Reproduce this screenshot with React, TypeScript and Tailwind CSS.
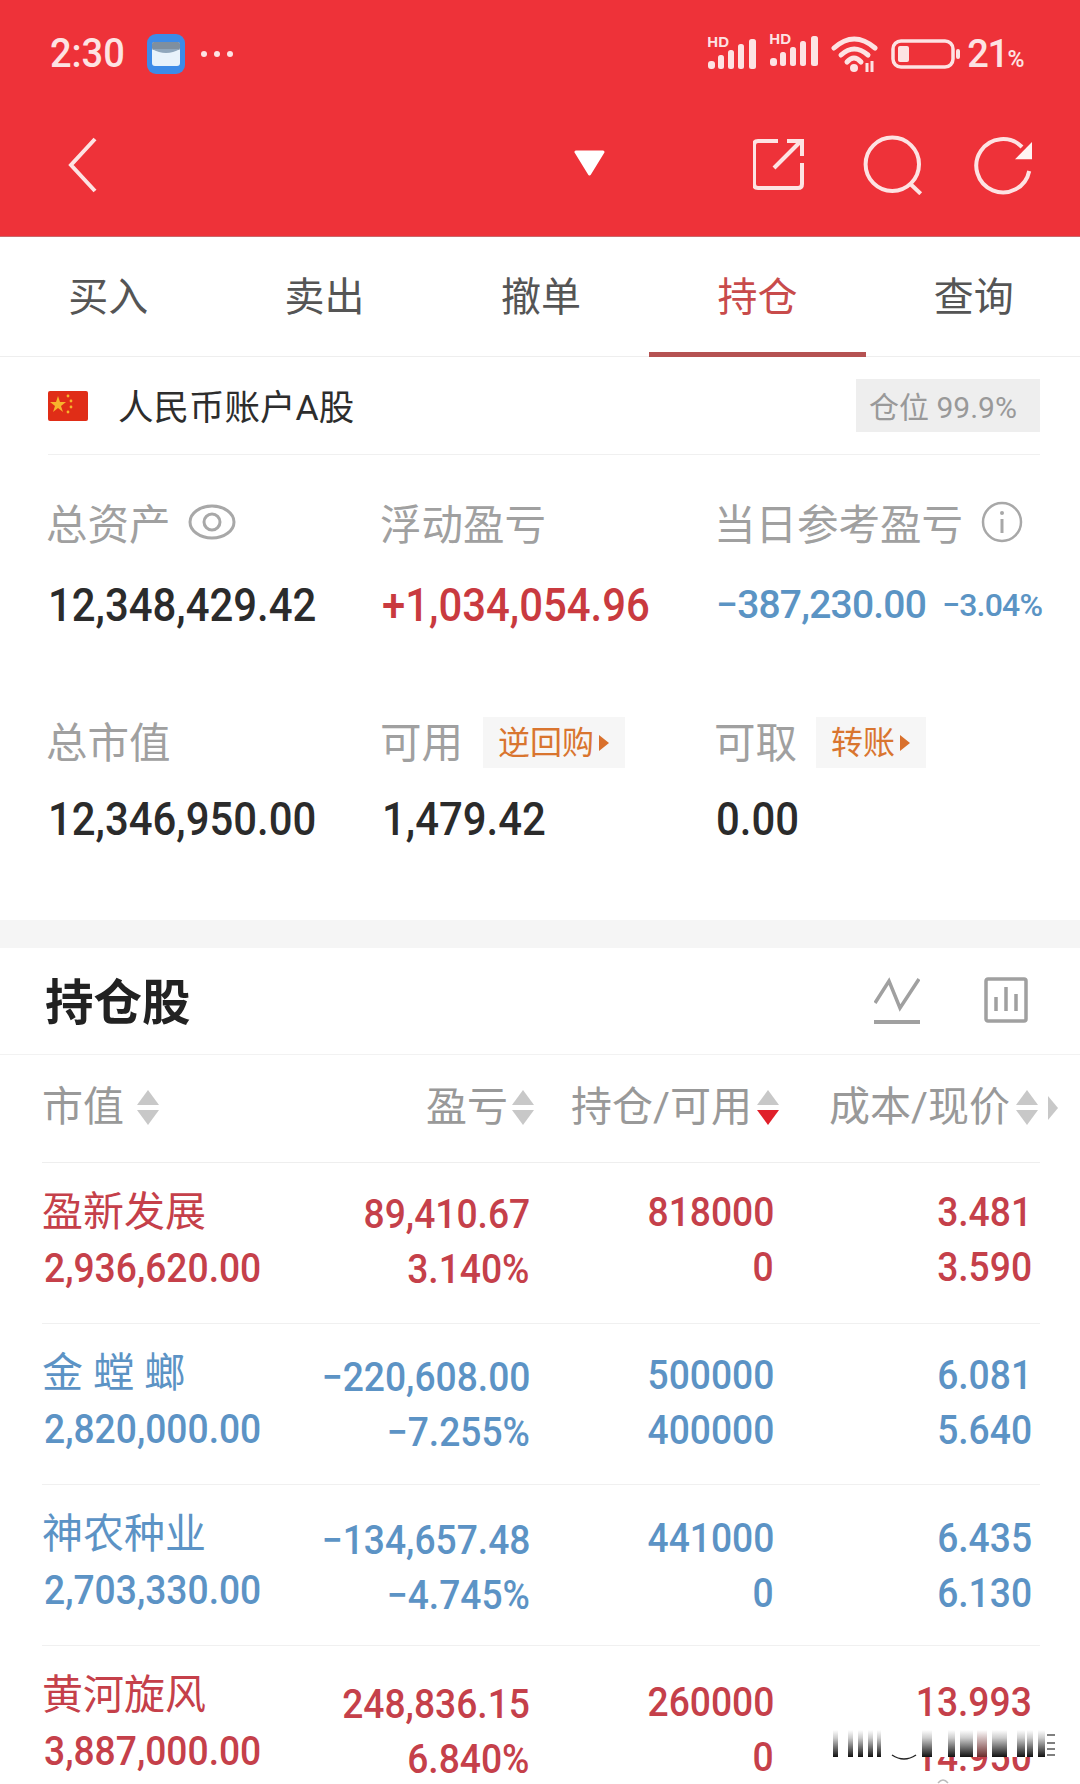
const rows = [
  { name: "盈新发展", mv: "2,936,620.00", p: "89,410.67", r: "3.140%", h: "818000", a: "0", c: "3.481", n: "3.590", up: true, off: "mt-[0px]" },
  { name: "金 螳 螂", mv: "2,820,000.00", p: "−220,608.00", r: "−7.255%", h: "500000", a: "400000", c: "6.081", n: "5.640", up: false, off: "mt-[2px]" },
  { name: "神农种业", mv: "2,703,330.00", p: "−134,657.48", r: "−4.745%", h: "441000", a: "0", c: "6.435", n: "6.130", up: false, off: "mt-[4px]" },
  { name: "黄河旋风", mv: "3,887,000.00", p: "248,836.15", r: "6.840%", h: "260000", a: "0", c: "13.993", n: "14.950", up: true, off: "mt-[7px]" },
];

function Sort({ red = false }: { red?: boolean }) {
  return (
    <svg width="24" height="37" viewBox="0 0 24 37" className="shrink-0">
      <path d="M12 1 L23 16 H1 Z" fill="#c8c8c8" strokeLinejoin="round" />
      <path d="M12 36 L23 21 H1 Z" fill={red ? "#e0202a" : "#c8c8c8"} />
    </svg>
  );
}

function Signal() {
  return (
    <span className="relative inline-block w-[50px] h-[32px]">
      <span className="absolute left-0 top-[-4px] text-[15px] font-bold leading-none text-[#fde3e3] font-['Liberation_Sans',sans-serif]">HD</span>
      <svg width="50" height="32" viewBox="0 0 50 32" className="absolute left-0 top-0">
        <g fill="#fde3e3">
          <rect x="1" y="23" width="7" height="8" rx="3" />
          <rect x="11" y="17" width="6" height="14" rx="2.5" />
          <rect x="21" y="12" width="6" height="19" rx="2.5" />
          <rect x="31" y="6" width="6" height="25" rx="2.5" />
          <rect x="42" y="1" width="7" height="30" rx="2.5" />
        </g>
      </svg>
    </span>
  );
}

const big = "h-[60px] flex items-center text-[46px] font-medium origin-left scale-x-[0.91] whitespace-nowrap";

export default function App() {
  return (
    <div className="relative w-[1080px] h-[1784px] overflow-hidden bg-white font-['Roboto','Noto_Sans_CJK_SC',sans-serif]">
      <header className="h-[237px] bg-[#ee3239] flex flex-col border-b border-[#c9686b]">
        <div className="h-[108px] flex items-center justify-between pl-[50px] pr-[57px]">
          <div className="flex items-center">
            <span className="text-[40px] font-medium leading-none text-[#fde3e3] origin-left scale-x-[0.95]">2:30</span>
            <svg width="38" height="40" viewBox="0 0 38 40" className="ml-[18px]">
              <rect x="0" y="0" width="38" height="40" rx="9" fill="#3d8be8" />
              <rect x="5" y="8" width="28" height="24" rx="3" fill="#e8f2fb" />
              <rect x="5" y="8" width="28" height="8" rx="2" fill="#7f8f9f" />
              <path d="M5 15 Q19 23 33 15" fill="#8fa6bc" />
            </svg>
            <div className="ml-[16px] flex gap-[7px]">
              <span className="w-[6px] h-[6px] rounded-full bg-[#fde3e3]" />
              <span className="w-[6px] h-[6px] rounded-full bg-[#fde3e3]" />
              <span className="w-[6px] h-[6px] rounded-full bg-[#fde3e3]" />
            </div>
          </div>
          <div className="flex items-center">
            <Signal />
            <span className="ml-[12px]"><Signal /></span>
            <svg width="48" height="36" viewBox="0 0 48 36" className="ml-[12px]">
              <g fill="none" stroke="#fde3e3" strokeWidth="5" strokeLinecap="round">
                <path d="M3 12 Q23 -6 44 12" />
                <path d="M10 19 Q23 7 37 19" />
                <path d="M16 26 Q23 18 30 26" />
              </g>
              <circle cx="23" cy="32" r="4" fill="#fde3e3" />
              <path d="M36 27 V36 M41 25 V36" stroke="#fde3e3" strokeWidth="3" />
            </svg>
            <svg width="70" height="30" viewBox="0 0 70 30" className="ml-[12px]">
              <rect x="2" y="2" width="60" height="26" rx="8" fill="none" stroke="#fde3e3" strokeWidth="3.5" />
              <rect x="7" y="7" width="11" height="16" rx="2" fill="#fde3e3" />
              <rect x="65" y="10" width="4" height="10" rx="2" fill="#fde3e3" />
            </svg>
            <span className="ml-[6px] text-[38px] font-medium leading-none text-[#fde3e3] tracking-[-1.5px]">21<span className="text-[23px]">%</span></span>
          </div>
        </div>
        <div className="flex-1 flex items-center pl-[66px] pb-[14px]">
          <svg width="32" height="56" viewBox="0 0 32 56" className="shrink-0">
            <path d="M29 2 L5 28 L29 54" fill="none" stroke="#fde3e3" strokeWidth="4" />
          </svg>
          <svg width="33" height="26" viewBox="0 0 33 26" className="ml-[475px] mb-[4px] shrink-0">
            <path d="M3 2 H30 L16.5 24 Z" fill="#ffffff" stroke="#ffffff" strokeWidth="3" strokeLinejoin="round" />
          </svg>
          <svg width="52" height="54" viewBox="0 0 52 54" className="ml-[147px] shrink-0">
            <path d="M25 3 H5 Q1 3 1 7 V46 Q1 50 5 50 H45 Q49 50 49 46 V25" fill="none" stroke="#fde3e3" strokeWidth="4" />
            <path d="M21 30 L48 3" fill="none" stroke="#fde3e3" strokeWidth="4" />
            <path d="M34 3 H49 V18" fill="none" stroke="#fde3e3" strokeWidth="4" />
          </svg>
          <svg width="60" height="60" viewBox="0 0 60 60" className="ml-[58px] shrink-0">
            <circle cx="29.3" cy="29.3" r="26.7" fill="none" stroke="#fde3e3" strokeWidth="4" />
            <path d="M47.7 49.3 L57.7 58.7" stroke="#fde3e3" strokeWidth="4" />
          </svg>
          <svg width="62" height="62" viewBox="0 0 62 62" className="ml-[48px] shrink-0">
            <path d="M51 13 A26.7 26.7 0 1 0 58.2 37" fill="none" stroke="#fde3e3" strokeWidth="4" />
            <path d="M61 8 V25.3 H44 Z" fill="#fff3f3" />
          </svg>
        </div>
      </header>

      <div className="h-[120px] border-b border-[#eeeeee]">
        <nav className="w-[1082px] h-full grid grid-cols-5 pt-[2px]">
          {["买入", "卖出", "撤单", "持仓", "查询"].map((t, i) => (
            <div key={t} className={`relative flex items-center justify-center text-[40px] ${i === 3 ? "text-[#c84b4b]" : "text-[#555555]"}`}>
              {t}
              {i === 3 && <span className="absolute inset-x-0 -bottom-[1px] h-[5px] bg-[#b55252]" />}
            </div>
          ))}
        </nav>
      </div>

      <section className="mx-[48px] w-[992px] h-[98px] flex items-center justify-between border-b border-[#f0f0f0]">
        <div className="flex items-center">
          <svg width="40" height="30" viewBox="0 0 40 30">
            <rect width="40" height="30" rx="2" fill="#e02d17" />
            <path d="M10 5 L12 11 L18 11 L13 15 L15 21 L10 17 L5 21 L7 15 L2 11 L8 11 Z" fill="#f7b42c" />
            <circle cx="20" cy="5" r="1.4" fill="#f7b42c" /><circle cx="23" cy="10" r="1.4" fill="#f7b42c" /><circle cx="23" cy="16" r="1.4" fill="#f7b42c" /><circle cx="20" cy="21" r="1.4" fill="#f7b42c" />
          </svg>
          <span className="ml-[30px] mt-[7px] text-[35.5px] text-[#2d2d2d]">人民币账户A股</span>
        </div>
        <div className="w-[184px] h-[53px] flex items-center justify-center bg-[#eeeeee] text-[30px] text-[#999999] pt-[3px] pr-[10px]">仓位 99.9%</div>
      </section>

      <section className="px-[48px] pt-[41px] h-[465px]">
        <div className="grid grid-cols-[334px_334px_1fr] -ml-[2px]">
          <div className="flex items-center h-[60px] text-[41.5px] text-[#a0a0a0]">
            总资产
            <svg width="48" height="36" viewBox="0 0 48 36" className="ml-[17px] mb-[8px]">
              <ellipse cx="24" cy="18" rx="22" ry="16" fill="none" stroke="#a8a8a8" strokeWidth="3" />
              <circle cx="24" cy="18" r="8" fill="none" stroke="#a8a8a8" strokeWidth="3" />
            </svg>
          </div>
          <div className="h-[60px] flex items-center text-[41.5px] text-[#a0a0a0]">浮动盈亏</div>
          <div className="flex items-center h-[60px] text-[41.5px] text-[#a0a0a0]">
            当日参考盈亏
            <svg width="42" height="42" viewBox="0 0 42 42" className="ml-[18px] mb-[8px]">
              <circle cx="21" cy="21" r="19" fill="none" stroke="#a8a8a8" strokeWidth="2.5" />
              <path d="M21 18 V32" stroke="#a8a8a8" strokeWidth="3" />
              <circle cx="21" cy="12" r="2" fill="#a8a8a8" />
            </svg>
          </div>
        </div>
        <div className="grid grid-cols-[334px_336px_1fr] mt-[19px]">
          <div className={`${big} text-[#2b2b2b]`}>12,348,429.42</div>
          <div className={`${big} text-[#c93a3f]`}>+1,034,054.96</div>
          <div className="-ml-[2px] h-[60px] flex items-center text-[#5b94c4] font-medium whitespace-nowrap">
            <span className="text-[39px] tracking-[-0.8px]">−387,230.00</span>
            <span className="ml-[16px] text-[32px] tracking-[-0.8px]">−3.04%</span>
          </div>
        </div>
        <div className="grid grid-cols-[334px_334px_1fr] mt-[79px] -ml-[2px]">
          <div className="h-[60px] flex items-center text-[41.5px] text-[#a0a0a0]">总市值</div>
          <div className="h-[60px] flex items-center text-[41.5px] text-[#a0a0a0]">
            可用
            <span className="ml-[20px] mb-[3px] w-[142px] h-[51px] flex items-center justify-center gap-[4px] bg-[#f6f6f6] text-[32px] text-[#d9752f]">
              逆回购
              <svg width="12" height="18" viewBox="0 0 12 18"><path d="M1 1 L11 9 L1 17 Z" fill="#d9702c" /></svg>
            </span>
          </div>
          <div className="h-[60px] flex items-center text-[41.5px] text-[#a0a0a0]">
            可取
            <span className="ml-[19px] mb-[3px] w-[110px] h-[51px] flex items-center justify-center gap-[4px] bg-[#f6f6f6] text-[32px] text-[#d9752f]">
              转账
              <svg width="12" height="18" viewBox="0 0 12 18"><path d="M1 1 L11 9 L1 17 Z" fill="#d9702c" /></svg>
            </span>
          </div>
        </div>
        <div className="grid grid-cols-[334px_336px_1fr] mt-[15px]">
          <div className={`${big} text-[#2b2b2b]`}>12,346,950.00</div>
          <div className={`${big} text-[#2b2b2b]`}>1,479.42</div>
          <div className={`-ml-[2px] ${big} text-[#2b2b2b]`}>0.00</div>
        </div>
      </section>

      <div className="h-[28px] bg-[#f5f5f5]" />

      <section className="h-[107px] pl-[45px] pr-[52px] flex items-center justify-between border-b border-[#f2f2f2]">
        <span className="mt-[6px] text-[48.5px] font-bold text-[#222222]">持仓股</span>
        <div className="flex items-center gap-[64px] mb-[2px]">
          <svg width="46" height="48" viewBox="0 0 46 48">
            <path d="M1 27 L15 5 L26 32 L45 3" fill="none" stroke="#a0a0a0" strokeWidth="3.5" />
            <rect x="0" y="44" width="46" height="4" fill="#a0a0a0" />
          </svg>
          <svg width="44" height="46" viewBox="0 0 44 46">
            <rect x="2" y="2" width="40" height="42" rx="2" fill="none" stroke="#a0a0a0" strokeWidth="3.5" />
            <path d="M12 20 V34 M22 10 V34 M32 17 V34" stroke="#a0a0a0" strokeWidth="3.5" />
          </svg>
        </div>
      </section>

      <section className="h-[108px] mx-[42px] w-[998px] border-b border-[#eeeeee] text-[41px] text-[#999999]">
        <div className="flex items-center h-full pb-[2px]">
          <span className="w-[82px] shrink-0">市值</span>
          <span className="ml-[12px] shrink-0"><Sort /></span>
          <span className="ml-[266px] w-[82px] shrink-0">盈亏</span>
          <span className="ml-[3px] shrink-0"><Sort /></span>
          <span className="ml-[36px] w-[182px] shrink-0 whitespace-nowrap">持仓/可用</span>
          <span className="ml-[3px] shrink-0"><Sort red /></span>
          <span className="ml-[49px] w-[182px] shrink-0 whitespace-nowrap">成本/现价</span>
          <span className="ml-[4px] shrink-0"><Sort /></span>
          <svg width="12" height="26" viewBox="0 0 12 26" className="ml-[8px] shrink-0"><path d="M1 1 L11 13 L1 25 Z" fill="#c8c8c8" /></svg>
        </div>
      </section>

      {rows.map((r) => (
        <div key={r.name} className={`mx-[42px] w-[998px] h-[161px] grid grid-cols-[270px_218px_244px_258px] pt-[20px] border-b border-[#f0f0f0] text-[40px] font-medium ${r.up ? "text-[#c5404a]" : "text-[#5c93c5]"}`}>
          <div className="flex flex-col whitespace-nowrap">
            <span className="h-[60px] flex items-center font-normal text-[41px]">{r.name}</span>
            <span className="h-[54px] flex items-center -mt-[1px] ml-[2px] origin-left scale-x-[0.93]">{r.mv}</span>
          </div>
          <div className={`flex flex-col items-end whitespace-nowrap pt-[4px] ${r.off}`}><span className="h-[55px] flex items-center origin-right scale-x-[0.93]">{r.p}</span><span className="h-[55px] flex items-center origin-right scale-x-[0.93]">{r.r}</span></div>
          <div className={`flex flex-col items-end pt-[2px] ${r.off}`}><span className="h-[55px] flex items-center origin-right scale-x-[0.93]">{r.h}</span><span className="h-[55px] flex items-center origin-right scale-x-[0.93]">{r.a}</span></div>
          <div className={`flex flex-col items-end pt-[2px] ${r.off}`}><span className="h-[55px] flex items-center origin-right scale-x-[0.93]">{r.c}</span><span className="h-[55px] flex items-center origin-right scale-x-[0.93]">{r.n}</span></div>
        </div>
      ))}

      <svg width="235" height="59" viewBox="0 0 235 59" className="absolute left-[825px] top-[1725px]">
        <defs>
          <linearGradient id="wm" x1="0" y1="0" x2="0" y2="1">
            <stop offset="0" stopColor="#ffffff" />
            <stop offset="0.3" stopColor="#cccccc" />
            <stop offset="1" stopColor="#111111" />
          </linearGradient>
          <linearGradient id="wr" x1="0" y1="0" x2="0" y2="1">
            <stop offset="0" stopColor="#ffffff" />
            <stop offset="1" stopColor="#6b2c2c" />
          </linearGradient>
        </defs>
        <rect x="0" y="0" width="235" height="32" fill="#ffffff" />
        <g fill="url(#wm)">
          {[
            [8, 5], [23, 5], [33, 5], [43, 5], [52, 4],
            [97, 10], [123, 7], [135, 13], [167, 15], [192, 8], [202, 6], [213, 7],
          ].map(([x, w]) => (
            <rect key={x} x={x} y={5} width={w} height={27} />
          ))}
        </g>
        <rect x="152" y="5" width="10" height="27" fill="url(#wr)" />
        <path d="M67 30 Q79 38 91 30" fill="none" stroke="#222222" strokeWidth="1.5" />
        <path d="M222 10 H230 M222 18 H230 M222 24 H230 M222 30 H230" stroke="#555555" strokeWidth="1.5" />
        <path d="M113 58 Q118 52 123 58" fill="none" stroke="#bbbbbb" strokeWidth="1.5" />
      </svg>
    </div>
  );
}
